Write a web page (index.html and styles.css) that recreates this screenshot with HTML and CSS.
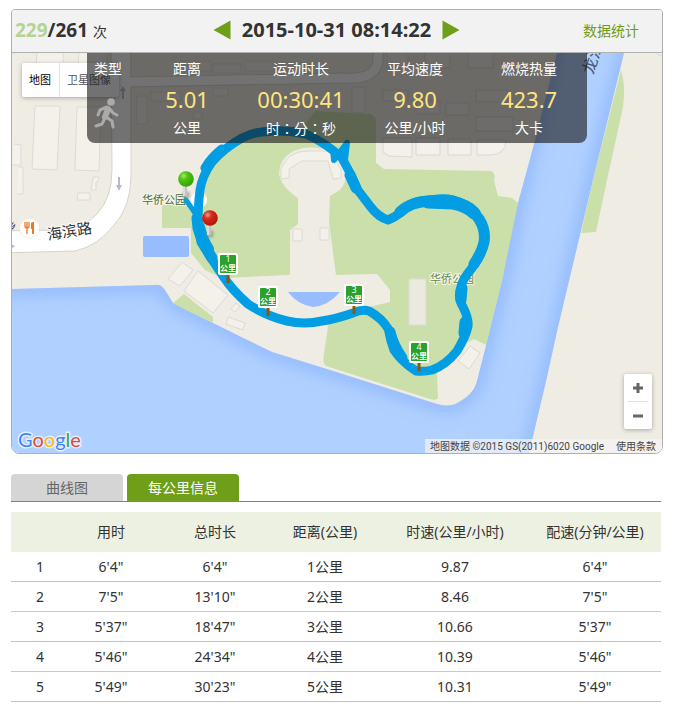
FILE: index.html
```html
<!DOCTYPE html>
<html lang="zh-CN">
<head>
<meta charset="utf-8">
<meta name="viewport" content="width=device-width, initial-scale=1">
<title>运动记录</title>
<link rel="stylesheet" href="styles.css">
</head>
<body>
<main class="page">
  <section class="card">
    <header class="card-head">
      <p class="count"><b class="current">229</b><b>/261</b> <span class="unit">次</span></p>
      <div class="pager">
        <button class="arrow" type="button" aria-label="上一次"><svg width="18" height="20" viewBox="0 0 18 20"><path d="M17.500 .5V19.500L.5 10z"/></svg></button>
        <h1 class="date">2015-10-31 08:14:22</h1>
        <button class="arrow" type="button" aria-label="下一次"><svg width="18" height="20" viewBox="0 0 18 20"><path d="M.5 .5V19.500L17.500 10z"/></svg></button>
      </div>
      <a class="stats-link" href="#stats">数据统计</a>
    </header>

    <div class="map">
      <svg class="map-canvas" viewBox="12 53 650 400" preserveAspectRatio="xMidYMid slice" aria-label="路线地图">
        <defs>
          <path id="water" d="M12 289 L155 285 Q161 284 165 290 L173 303 L185 309 L213 323 L272 352 L330 370 L437 404 Q450 408 459 402 Q473 394 476 384 L486 345 L503 276 L510 232 L518 203 L533 148 L557 53 H624 L593 180 L574 260 L558 327 L547 377 L529 453 H12Z"/>
          <clipPath id="waterClip"><use href="#water"/></clipPath>
          <filter id="shade" x="-20%" y="-20%" width="140%" height="140%"><feGaussianBlur stdDeviation="8"/></filter>
          <filter id="soft" x="-50%" y="-50%" width="200%" height="200%"><feGaussianBlur stdDeviation="1"/></filter>
          <radialGradient id="greenBall" cx=".35" cy=".3" r=".75"><stop offset="0" stop-color="#a4ea70"/><stop offset=".35" stop-color="#4ec410"/><stop offset="1" stop-color="#36a000"/></radialGradient>
          <radialGradient id="redBall" cx=".35" cy=".3" r=".75"><stop offset="0" stop-color="#f0998f"/><stop offset=".35" stop-color="#d62a1a"/><stop offset="1" stop-color="#b01408"/></radialGradient>
          <g id="pin"><ellipse cx="0" cy="16" rx="4" ry="4" fill="#888" opacity=".55" filter="url(#soft)"/><path d="M-1 6V17" stroke="#dcdce0" stroke-width="4"/><path d="M0 6V17" stroke="#aaa" stroke-width="1"/></g>
          <g id="sign"><path d="M0 10V19" stroke="#8a5a0a" stroke-width="3"/><rect x="-10" y="-11" width="20" height="22" rx="2" fill="#fff"/><rect x="-8" y="-9" width="16" height="18" rx="1" fill="#2ca02c"/></g>
        </defs>

        <rect x="12" y="53" width="650" height="400" fill="#efece4"/>
        <use href="#water" fill="#b0d0ff"/>
        <g clip-path="url(#waterClip)" fill="none" stroke="#86b0fb" stroke-width="10" filter="url(#shade)">
          <path d="M0 289 L155 285 Q161 284 165 290 L173 303 L213 323 L272 352 L330 370 L437 404 Q450 408 459 402 Q473 394 476 384 L486 345 L503 276 L518 203 L557 40"/>
          <path d="M628 40 L593 180 L574 260 L547 377 L527 465"/>
        </g>

        <!-- streets -->
        <path d="M0 231 L60 230 Q83 229 97 214 Q112 198 112 170 L111 40 H131 V175 Q131 207 114 225 Q98 246 75 251 L0 253Z" fill="#fff" stroke="#d6d2c8"/>
        <path d="M131 82 L345 78 Q377 80 378 60 V45" fill="none" stroke="#d8d4ca" stroke-width="11"/>
        <path d="M125 82 L345 78 Q377 80 378 60 V45" fill="none" stroke="#fff" stroke-width="9"/>

        <!-- park -->
        <path d="M203 172 L225 148 L260 133 H298 L315 111 L370 114 Q376 116 376 121 V163 L384 169 L491 171 Q496 173 494 181 L498 196 L512 198 L518 203 L503 276 L486 345 L474 339 L452 351 L437 374 L438 398 Q436 401 430 399 L326 366 Q322 363 324 354 L329 320 L290 275 L222 278 L205 270 L191 253 V228 H162 V205 H197Z" fill="#cadfaa"/>
        <path d="M279 174 Q280 153 303 148 Q332 145 345 164 Q349 180 340 190 L330 196 L329 222 L336 275 L377 274 L390 290 V302 L365 308 L329 321 L280 319 L230 279 L290 275 V230 L298 224 V198 Q281 187 279 174Z" fill="#efece4"/>
        <path d="M437 371 L456 350 L474 340 L486 345 L476 384 L440 392Z" fill="#efece4"/>
        <path d="M173 303 L184 294 L213 317 V323 L184 309Z" fill="#cadfaa"/>
        <path d="M621 70 Q626 85 623 107 L607 180 L596 232 L581 233 L593 180Z" fill="#cadfaa"/>
        <rect x="143" y="236" width="46" height="21" rx="2" fill="#98bdff"/>
        <path d="M288 292 H340 Q328 306 313 307 Q298 305 288 292Z" fill="#98bdff"/>

        <!-- buildings -->
        <g fill="#f4f1eb" stroke="#dddad5">
          <path d="M281 179 V169 Q288 151 307 151 H331 L341 170 V178 L333 179 L328 161 H302 L289 169 V178Z"/>
          <path d="M293 229h9v12h-9zM320 228h9v12h-9z"/>
          <path d="M409 279h17v46h-17z" fill="#ebeadf"/>
          <path d="M168 279 L182 262 L193 270 L180 286ZM184 291 L198 271 L228 295 L213 313ZM231 309 L236 303 L240 306 L235 312ZM228 317 L245 323 L243 330 L226 324Z"/>
          <path d="M458 361 L470 346 L480 353 L469 369Z"/>
          <path d="M35 106 H60 L57 170 L32 169ZM77 107 H101 L99 171 L75 170ZM14 144 L21 145 V165 H12M18 167h5v27h-6M93 177h6l-1 5h-2v8h-5zM78 193h12v7H77z"/>
          <path d="M137 96h10v28h-11zM151 92h30v9h-30zM213 88h15v8h-15zM193 112h9v7h-9zM175 61h36v10h-36zM213 64h28v9h-28zM245 61h29v10h-29zM281 63h24v9h-24zM37 51h26v14H36zM79 51h28v14H78z"/>
        </g>
        <g fill="#f4f1eb" stroke="#d8d6da">
          <path d="M387 50h21v18h-21zM425 50h25v18h-25zM468 50h25v18h-25zM383 90h25v11h-25zM416 101h24v13h-24zM446 103h23v12h-23zM476 90h32v12h-32zM476 117h37v14h-37zM383 138h29v19l-23-1-6-4zM416 138h24v17h-24zM448 139h23v16h-23zM477 140h29q0 15-16 15h-13zM352 87h13v26h-13zM658 49v6h6"/>
        </g>
        <circle cx="199" cy="200" r="8" fill="#fff"/>
        <g fill="#b5b8d3">
          <path d="M118 177h2v8h2l-3 6-3-6h2zM123 86l3 5h-2v8h-2v-8h-2z"/>
          <path d="M11 244l4 2-4 3z"/>
        </g>

        <!-- map labels -->
        <text class="road-label" transform="translate(48 240) rotate(-9)">海滨路</text>
        <text class="river-label" transform="translate(593 75) rotate(-72)">龙江</text>
        <text class="lane-label" transform="translate(8 231) rotate(-18)">乡</text>
        <text class="park-label dark" x="142" y="204">华侨公园</text>
        <text class="park-label" x="430" y="283">华侨公园</text>
        <circle cx="29.500" cy="228" r="10" fill="#fff" stroke="#ddd" stroke-width=".5"/>
        <path d="M25 222v4q0 2 2 2t2-2v-4M27 222v12" fill="none" stroke="#ee7b1b" stroke-width="1.300"/>
        <path d="M31 223q1-1 3-1v12h-2v-5h-1z" fill="#ee7b1b"/>

        <!-- recorded track -->
        <g fill="none" stroke="#029de3" stroke-linecap="round" stroke-linejoin="round">
          <path stroke-width="9" d="M198 226 Q198 205 200 190 Q202 176 212 162 Q224 148 242 138 Q252 133 262 132 Q284 129 306 134 Q326 143 342 158 L350 173 L357 189 L370 206 Q378 217 388 220 Q396 217 402 211 Q412 200 430 200 Q445 198 453 200 Q471 205 479 219 Q486 230 484 242 Q482 252 472 268 Q462 280 461 287 Q457 297 463 307 Q469 319 468 326 Q466 336 457 351 Q446 365 432 370 Q424 372 416 371 Q402 362 394 350 Q390 340 389 330 Q382 318 369 311 Q362 309 353 313 Q336 319 322 321 Q304 325 287 321 Q266 316 248 304 Q232 290 223 276 L211 258 L201 242Z"/>
          <path stroke-width="5" d="M186 200 L195 213"/>
          <path stroke-width="11" d="M197 218 L198 228 Q202 242 212 258"/>
          <path stroke-width="12" d="M199 227 Q202 240 208 249"/>
          <path stroke-width="11" d="M206 168 Q212 158 222 150 M350 175 L356 188"/>
          <path stroke-width="11" d="M400 212 Q410 202 430 201 Q445 199 453 201 Q471 206 479 219 Q486 230 484 242 Q482 252 474 264"/>
          <path stroke-width="13" d="M428 202 L453 203 Q466 205 474 213"/>
          <path stroke-width="6" d="M333 150 L334 160 L347 143 L345 160"/>
          <path stroke-width="11" d="M390 332 Q393 345 402 358 M465 322 L464 333 M462 288 L461 300"/>
        </g>

        <!-- distance signs -->
        <g class="sign-text">
          <g transform="translate(228 264)"><use href="#sign"/><text y="-2">1</text><text class="km" y="7">公里</text></g>
          <g transform="translate(268 297)"><use href="#sign"/><text y="-2">2</text><text class="km" y="7">公里</text></g>
          <g transform="translate(354 295)"><use href="#sign"/><text y="-2">3</text><text class="km" y="7">公里</text></g>
          <g transform="translate(419 352)"><use href="#sign"/><text y="-2">4</text><text class="km" y="7">公里</text></g>
        </g>
        <g transform="translate(186 179)"><use href="#pin"/><circle r="7.800" fill="url(#greenBall)"/></g>
        <g transform="translate(210 218)"><use href="#pin"/><circle r="7.800" fill="url(#redBall)"/></g>
      </svg>

      <div class="map-type">
        <button class="type-btn active" type="button">地图</button>
        <button class="type-btn" type="button">卫星图像</button>
      </div>

      <div class="summary">
        <div class="metric kind">
          <span>类型</span>
          <svg class="runner" width="26" height="32" viewBox="0 0 26 32" role="img" aria-label="跑步">
            <circle cx="17" cy="4" r="3.800" fill="#aaa"/>
            <g fill="none" stroke="#aaa" stroke-linecap="round" stroke-linejoin="round">
              <path d="M14 11 L11 19" stroke-width="6"/>
              <path d="M13 9 L6 12 L4 17 M16 11 L19 15 L23 17" stroke-width="3"/>
              <path d="M12 19 L18 23 L19 29 M11 20 L8 26 L2 28" stroke-width="3"/>
            </g>
          </svg>
        </div>
        <div class="metric"><span>距离</span><strong>5.01</strong><span>公里</span></div>
        <div class="metric"><span>运动时长</span><strong>00:30:41</strong><span class="hms" lang="zh-TW">时：分：秒</span></div>
        <div class="metric"><span>平均速度</span><strong>9.80</strong><span>公里/小时</span></div>
        <div class="metric"><span>燃烧热量</span><strong>423.7</strong><span>大卡</span></div>
      </div>

      <div class="zoom">
        <button type="button" aria-label="放大"><svg width="12" height="12" viewBox="0 0 12 12"><path d="M1 6H11M6 1V11"/></svg></button>
        <button type="button" aria-label="缩小"><svg width="12" height="12" viewBox="0 0 12 12"><path d="M1 6H11"/></svg></button>
      </div>

      <div class="brand"><span class="b">G</span><span class="r">o</span><span class="y">o</span><span class="b">g</span><span class="g">l</span><span class="r">e</span></div>
      <div class="legal"><span>地图数据 ©2015 GS(2011)6020 Google</span><a href="#terms">使用条款</a></div>
    </div>
  </section>

  <section class="details">
    <nav class="tabs">
      <button class="tab" type="button">曲线图</button>
      <button class="tab selected" type="button">每公里信息</button>
    </nav>
    <table class="laps">
      <colgroup><col class="c-no"><col class="c-time"><col class="c-total"><col class="c-dist"><col class="c-speed"><col class="c-pace"></colgroup>
      <thead><tr><th></th><th>用时</th><th>总时长</th><th>距离(公里)</th><th>时速(公里/小时)</th><th>配速(分钟/公里)</th></tr></thead>
      <tbody>
        <tr><td>1</td><td>6'4"</td><td>6'4"</td><td>1公里</td><td>9.87</td><td>6'4"</td></tr>
        <tr><td>2</td><td>7'5"</td><td>13'10"</td><td>2公里</td><td>8.46</td><td>7'5"</td></tr>
        <tr><td>3</td><td>5'37"</td><td>18'47"</td><td>3公里</td><td>10.66</td><td>5'37"</td></tr>
        <tr><td>4</td><td>5'46"</td><td>24'34"</td><td>4公里</td><td>10.39</td><td>5'46"</td></tr>
        <tr><td>5</td><td>5'49"</td><td>30'23"</td><td>5公里</td><td>10.31</td><td>5'49"</td></tr>
      </tbody>
    </table>
  </section>
</main>
</body>
</html>
```

FILE: styles.css
```css
* { box-sizing: border-box; }
body {
  margin: 0;
  background: #fff;
  color: #333;
  font: 14px/20px "Noto Sans", "Noto Sans CJK SC", sans-serif;
}
button { margin: 0; padding: 0; border: 0; background: none; font: inherit; color: inherit; cursor: pointer; }
a { text-decoration: none; color: inherit; }

.page { padding: 9px 12px 18px 11px; }

.card { border: 1px solid #b0b0b0; border-radius: 4px 4px 8px 8px; overflow: hidden; }
.card-head {
  display: grid;
  grid-template-columns: 1fr auto 1fr;
  align-items: center;
  height: 43px;
  padding: 0 4px 0 3px;
  background: #f2f2f2;
  border-bottom: 1px solid #b0b0b0;
}
.count { margin: 0; font-size: 19px; }
.current { color: #b4d494; }
.unit { font-size: 14px; }
.pager { display: flex; align-items: center; gap: 11px; margin-bottom: 3px; }
.date { margin: 0; font-size: 20px; line-height: 24px; }
.arrow { display: flex; }
.arrow svg { fill: #6f9f18; }
.stats-link { justify-self: end; padding-right: 19px; color: #739b14; }

.map { position: relative; height: 400px; }
.map-canvas { display: block; width: 100%; height: 400px; }
.road-label { font-size: 15px; fill: #333; stroke: #fff; stroke-width: 2px; paint-order: stroke; }
.lane-label { font-size: 10px; fill: #333; }
.river-label { font-size: 16px; fill: #46546e; }
.park-label { font-size: 11px; fill: #61885a; stroke: #f4f5e8; stroke-width: 2px; paint-order: stroke; }
.park-label.dark { fill: #44683e; }
.sign-text { font-size: 9px; fill: #fff; text-anchor: middle; }
.sign-text .km { font-size: 8px; font-weight: bold; }

.map-type {
  position: absolute; top: 10px; left: 10px;
  display: flex;
  background: #fff;
  border-radius: 2px;
  box-shadow: 0 1px 4px rgba(0, 0, 0, .3);
  font-size: 11px;
}
.type-btn { height: 34px; padding: 0 8px 0 7px; color: #565656; }
.type-btn.active { color: #000; border-right: 1px solid #e2e2e2; }

.summary {
  position: absolute; top: 0; left: 75px;
  display: grid;
  grid-template-columns: 43px repeat(4, 114px);
  height: 90px;
  padding-right: 1px;
  background: rgba(20, 20, 20, .6);
  border-radius: 0 0 8px 8px;
  color: #fff;
}
.metric { display: grid; grid-template-rows: 32px 28px 30px; align-items: center; justify-items: center; white-space: nowrap; }
.metric strong { font-size: 22px; font-weight: normal; color: #ffe57f; }
.kind { grid-template-rows: 32px 58px; justify-items: start; padding-left: 7px; }
.hms { font-family: "Noto Sans CJK TC", sans-serif; }

.zoom {
  position: absolute; right: 10px; bottom: 24px;
  display: flex; flex-direction: column;
  width: 28px;
  padding: 0 4px;
  background: #fff;
  border-radius: 2px;
  box-shadow: 0 1px 4px rgba(0, 0, 0, .3);
}
.zoom button { display: flex; align-items: center; justify-content: center; height: 27px; }
.zoom button + button { height: 28px; border-top: 1px solid #e2e2e2; }
.zoom path { fill: none; stroke: #666; stroke-width: 3; }

.brand {
  position: absolute; left: 6px; bottom: 2px;
  font: 20px/24px Lato, sans-serif;
  -webkit-text-stroke: 3px #e4efff;
  paint-order: stroke fill;
}
.b { color: #4285f4; }
.r { color: #ea4335; }
.y { color: #fbbc05; }
.g { color: #34a853; }

.legal {
  position: absolute; right: 0; bottom: 0;
  display: flex; gap: 12px;
  height: 14px;
  padding: 0 6px 0 5px;
  background: rgba(245, 245, 245, .7);
  color: #444;
  font: 10px/16px Roboto, "Noto Sans CJK SC", sans-serif;
}

.details { margin: 20px 2px 0 0; }
.tabs { display: flex; gap: 4px; border-bottom: 1px solid #6f9f18; }
.tab { width: 112px; height: 27px; border-radius: 4px 4px 0 0; background: #d5d5d5; color: #666; }
.tab.selected { background: #6f9f18; color: #fff; }

.laps { width: 100%; margin-top: 10px; table-layout: fixed; border-collapse: separate; border-spacing: 0; text-align: center; }
.c-no { width: 50px; }
.c-time { width: 100px; }
.c-total { width: 108px; }
.c-dist { width: 112px; }
.c-speed { width: 148px; }
.c-pace { width: 132px; }
.laps th, .laps td { padding: 0; white-space: nowrap; }
.laps th { height: 40px; background: #edf1e2; font-weight: normal; }
.laps td { height: 30px; border-bottom: 1px solid #c8c8c8; }
.laps td:first-child { padding-left: 8px; }
.laps tbody tr:nth-child(odd) td { border-bottom-color: #f8c61c; }
```
